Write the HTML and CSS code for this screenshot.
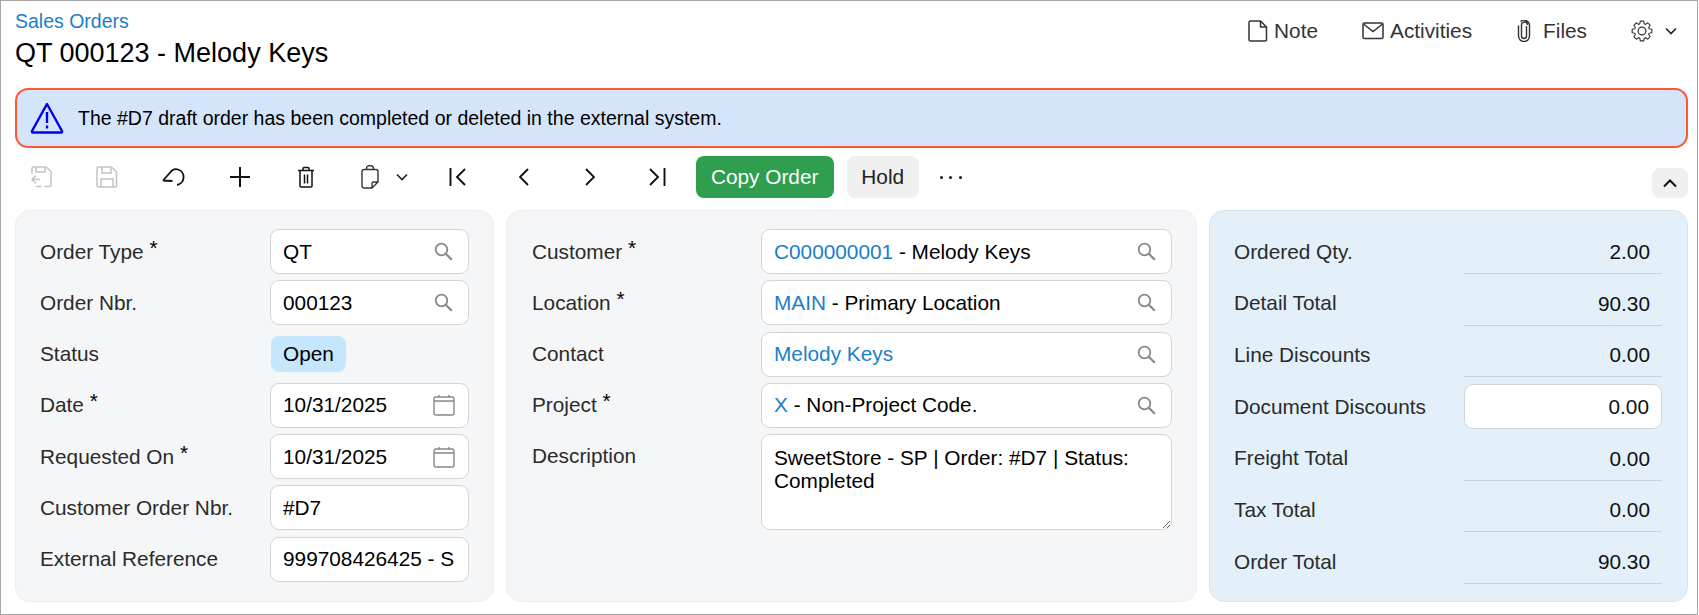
FILE: index.html

```html
<!DOCTYPE html>
<html>
	<head>
		<title>QT 000123 - Melody Keys</title>
		<meta charset="utf-8">
		<link rel="stylesheet" href="styles.css">
	</head>

	<body>
		<div class="page">

			<div class="header">
				<div>
					<a class="breadcrumb">Sales Orders</a>
					<h1 class="title">QT 000123 - Melody Keys</h1>
				</div>
				<div class="actions">
					<span class="action note">
						<svg width="20" height="22" viewBox="0 0 20 22"><path d="M2.5 1h10l6 6v12.500a1.500 1.500 0 0 1-1.500 1.500h-14.500a1.500 1.500 0 0 1-1.500-1.500v-17a1.500 1.500 0 0 1 1.500-1.500zM12.500 1v6h6" fill="none" stroke="#333" stroke-width="1.500"/></svg>
						Note
					</span>
					<span class="action activities">
						<svg width="22" height="18" viewBox="0 0 22 18"><rect x="1" y="1" width="20" height="15.500" rx="1.500" fill="none" stroke="#333" stroke-width="1.500"/><path d="M1.500 2l9.500 7.500 9.500-7.500" fill="none" stroke="#333" stroke-width="1.500"/></svg>
						Activities
					</span>
					<span class="action files">
						<svg width="14" height="22" viewBox="0 0 14 22"><path d="M9.500 6v10a2.500 2.500 0 0 1-5 0v-11a3 3 0 0 1 6 0v0M1.500 5.500v10.500a5.500 5.500 0 0 0 11 0v-11a5.500 5.500 0 0 0-9-3.500" fill="none" stroke="#333" stroke-width="1.400"/></svg>
						Files
					</span>
					<span class="action gear">
						<svg width="22" height="22" viewBox="-11 -11 22 22"><circle r="3.900" fill="none" stroke="#333" stroke-width="1.200"/><polygon points="-2.19,-7.17 -1.74,-9.85 1.74,-9.85 2.19,-7.17 3.52,-6.62 5.73,-8.19 8.19,-5.73 6.62,-3.52 7.17,-2.19 9.85,-1.74 9.85,1.74 7.17,2.19 6.62,3.52 8.19,5.73 5.73,8.19 3.52,6.62 2.19,7.17 1.74,9.85 -1.74,9.85 -2.19,7.17 -3.52,6.62 -5.73,8.19 -8.19,5.73 -6.62,3.52 -7.17,2.19 -9.85,1.74 -9.85,-1.74 -7.17,-2.19 -6.62,-3.52 -8.19,-5.73 -5.73,-8.19 -3.52,-6.62" fill="none" stroke="#333" stroke-width="1.100" stroke-linejoin="round"/></svg>
						<svg width="12" height="8" viewBox="0 0 12 8"><path d="M1 1.500l5 5 5-5" fill="none" stroke="#222" stroke-width="1.600"/></svg>
					</span>
				</div>
			</div>

			<div class="alert">
				<svg width="34" height="32" viewBox="0 0 34 32"><path d="M17 2l15 27a1 1 0 0 1-1 1.500h-28a1 1 0 0 1-1-1.500z" fill="none" stroke="#0000f0" stroke-width="2.400" stroke-linejoin="round"/><rect x="15.800" y="10" width="2.400" height="11" fill="#0000f0"/><rect x="15.800" y="23.500" width="2.400" height="3" fill="#0000f0"/></svg>
				<span>The #D7 draft order has been completed or deleted in the external system.</span>
			</div>

			<div class="toolbar">
				<span class="tool">
					<svg width="22" height="22" viewBox="0 0 22 22"><path d="M2 8v-5.500a1.500 1.500 0 0 1 1.500-1.500h12.500l5 4.500v13.500a1.500 1.500 0 0 1-1.500 1.500h-5M6 1v5h9v-5M10 13.500h-8M6 9.500l-4 4 4 4M6.500 20.500h5" fill="none" stroke="#c4c4c4" stroke-width="1.500"/></svg>
				</span>
				<span class="tool">
					<svg width="22" height="22" viewBox="0 0 22 22"><path d="M2.500 1h13l5 5v13.500a1.500 1.500 0 0 1-1.500 1.500h-16.500a1.500 1.500 0 0 1-1.500-1.500v-17a1.500 1.500 0 0 1 1.500-1.500zM6 1v6h9v-6M5 21v-8h12v8" fill="none" stroke="#c4c4c4" stroke-width="1.500"/></svg>
				</span>
				<span class="tool">
					<svg width="24" height="20" viewBox="0 0 24 20"><path d="M2 13.500l9-10q3-2 6-1a8 8 0 0 1-1 15.500M2 13.500l9.500.5" fill="none" stroke="#111" stroke-width="1.800"/></svg>
				</span>
				<span class="tool">
					<svg width="22" height="22" viewBox="0 0 22 22"><path d="M11 1v20M1 11h20" fill="none" stroke="#111" stroke-width="2"/></svg>
				</span>
				<span class="tool">
					<svg width="18" height="22" viewBox="0 0 18 22"><path d="M1 4.500h16M3 4.500v15.500a1 1 0 0 0 1 1h10a1 1 0 0 0 1-1v-15.500M6 4.500v-2a1 1 0 0 1 1-1h4a1 1 0 0 1 1 1v2M7.500 8.500v9M10.500 8.500v9" fill="none" stroke="#111" stroke-width="1.500"/></svg>
				</span>
				<span class="tool tool-wide">
					<svg width="18" height="24" viewBox="0 0 18 24"><path d="M3 4.500h12a2 2 0 0 1 2 2v10.500l-6 6h-8a2 2 0 0 1-2-2v-14.500a2 2 0 0 1 2-2zM5.500 4.500v-1a3.500 3 0 0 1 7 0v1M17 17h-4.500a1.500 1.500 0 0 0-1.500 1.500v4.500" fill="none" stroke="#333" stroke-width="1.400"/></svg>
					<svg width="12" height="8" viewBox="0 0 12 8"><path d="M1 1.500l5 5 5-5" fill="none" stroke="#222" stroke-width="1.600"/></svg>
				</span>
				<span class="tool">
					<svg width="18" height="18" viewBox="0 0 18 18"><path d="M1.500 0v18M16 1l-8 8 8 8" fill="none" stroke="#111" stroke-width="1.900"/></svg>
				</span>
				<span class="tool">
					<svg width="10" height="18" viewBox="0 0 10 18"><path d="M9 1l-8 8 8 8" fill="none" stroke="#111" stroke-width="1.900"/></svg>
				</span>
				<span class="tool">
					<svg width="10" height="18" viewBox="0 0 10 18"><path d="M1 1l8 8-8 8" fill="none" stroke="#111" stroke-width="1.900"/></svg>
				</span>
				<span class="tool">
					<svg width="18" height="18" viewBox="0 0 18 18"><path d="M16.500 0v18M2 1l8 8-8 8" fill="none" stroke="#111" stroke-width="1.900"/></svg>
				</span>
				<button class="btn btn-green">Copy Order</button>
				<button class="btn btn-grey">Hold</button>
				<span class="dots"><i></i><i></i><i></i></span>
				<span class="collapse">
					<svg width="14" height="9" viewBox="0 0 14 9"><path d="M1 7.500l6-6 6 6" fill="none" stroke="#111" stroke-width="2"/></svg>
				</span>
			</div>

			<div class="panels">

				<div class="panel form form-left">
					<label>Order Type <b>*</b></label>
					<div class="field"><span>QT</span><svg class="search" width="19" height="19" viewBox="0 0 19 19"><use href="#search"/></svg></div>
					<label>Order Nbr.</label>
					<div class="field"><span>000123</span><svg class="search" width="19" height="19" viewBox="0 0 19 19"><use href="#search"/></svg></div>
					<label>Status</label>
					<div class="status"><span class="pill">Open</span></div>
					<label>Date <b>*</b></label>
					<div class="field"><span>10/31/2025</span><svg width="22" height="22" viewBox="0 0 22 22"><use href="#calendar"/></svg></div>
					<label>Requested On <b>*</b></label>
					<div class="field"><span>10/31/2025</span><svg width="22" height="22" viewBox="0 0 22 22"><use href="#calendar"/></svg></div>
					<label>Customer Order Nbr.</label>
					<div class="field"><span>#D7</span></div>
					<label>External Reference</label>
					<div class="field"><span>999708426425 - S</span></div>
				</div>

				<div class="panel form form-mid">
					<label>Customer <b>*</b></label>
					<div class="field"><span><a>C000000001</a> - Melody Keys</span><svg class="search" width="19" height="19" viewBox="0 0 19 19"><use href="#search"/></svg></div>
					<label>Location <b>*</b></label>
					<div class="field"><span><a>MAIN</a> - Primary Location</span><svg class="search" width="19" height="19" viewBox="0 0 19 19"><use href="#search"/></svg></div>
					<label>Contact</label>
					<div class="field"><span><a>Melody Keys</a></span><svg class="search" width="19" height="19" viewBox="0 0 19 19"><use href="#search"/></svg></div>
					<label>Project <b>*</b></label>
					<div class="field"><span><a>X</a> - Non-Project Code.</span><svg class="search" width="19" height="19" viewBox="0 0 19 19"><use href="#search"/></svg></div>
					<label class="top">Description</label>
					<textarea class="desc" readonly>SweetStore - SP | Order: #D7 | Status: Completed</textarea>
				</div>

				<div class="panel totals">
					<label>Ordered Qty.</label><div class="amount">2.00</div>
					<label>Detail Total</label><div class="amount">90.30</div>
					<label>Line Discounts</label><div class="amount">0.00</div>
					<label>Document Discounts</label><div class="amount amount-input">0.00</div>
					<label>Freight Total</label><div class="amount">0.00</div>
					<label>Tax Total</label><div class="amount">0.00</div>
					<label>Order Total</label><div class="amount">90.30</div>
				</div>

			</div>
		</div>

		<svg class="defs" width="0" height="0">
			<symbol id="search" viewBox="0 0 19 19"><circle cx="7.500" cy="7.500" r="5.800" fill="none" stroke="#888" stroke-width="1.800"/><path d="M11.800 11.800l6 6" stroke="#888" stroke-width="2.200"/></symbol>
			<symbol id="calendar" viewBox="0 0 22 22"><path d="M3 3h16a2 2 0 0 1 2 2v14a2 2 0 0 1-2 2h-16a2 2 0 0 1-2-2v-14a2 2 0 0 1 2-2zM1 7h20M6 1v2M16 1v2" fill="none" stroke="#888" stroke-width="1.400"/></symbol>
		</svg>
	</body>
</html>
```

FILE: styles.css

```css
html, body {
	margin: 0;
	background-color: #fff;
}

body {
	font-family: "Liberation Sans", Arial, sans-serif;
	font-size: 20.8px;
	color: #111;
}

.defs {
	position: absolute;
}

.page {
	box-sizing: border-box;
	height: 615px;
	margin-right: 1px;
	border: 1px solid #a6a6a6;
	padding: 0 9px 0 14px;
	overflow: hidden;
}

/* header */
.header {
	display: flex;
	justify-content: space-between;
	height: 87px;
}

.breadcrumb {
	display: block;
	margin-top: 10px;
	font-size: 19.5px;
	line-height: 21px;
	color: #1a7fc9;
}

.title {
	margin: 6px 0 0;
	font-size: 27px;
	font-weight: normal;
	line-height: 31px;
	color: #000;
}

.actions {
	display: flex;
	align-items: center;
	height: 60px;
	color: #333;
}

.action {
	display: flex;
	align-items: center;
}

.note {
	gap: 6px;
	margin-right: 44px;
}

.activities {
	gap: 6px;
	margin-right: 45px;
}

.files {
	gap: 12px;
	margin-right: 44px;
}

.gear {
	gap: 12px;
	margin-right: 11px;
}

/* alert */
.alert {
	box-sizing: border-box;
	display: flex;
	align-items: center;
	gap: 14px;
	height: 60px;
	padding-left: 13px;
	border: 2px solid #ff5533;
	border-radius: 13px;
	background-color: #d4e4fb;
	font-size: 19.5px;
	color: #000;
}

/* toolbar */
.toolbar {
	display: flex;
	align-items: center;
	height: 42px;
	margin: 8px 0 0 -7px;
}

.tool {
	display: flex;
	align-items: center;
	justify-content: center;
	width: 66.2px;
	height: 42px;
}

.tool-wide {
	gap: 17px;
	width: 86px;
	padding-left: 6px;
	box-sizing: border-box;
}

.btn {
	height: 42px;
	border: 0;
	border-radius: 8px;
	font-family: inherit;
	font-size: 20.8px;
}

.btn-green {
	width: 138px;
	margin-left: 6px;
	background-color: #2f9e4f;
	color: #fff;
}

.btn-grey {
	width: 72px;
	margin-left: 13px;
	background-color: #f0f0f0;
	color: #222;
}

.dots {
	display: flex;
	gap: 6.5px;
	margin-left: 21px;
}

.dots i {
	width: 3px;
	height: 3px;
	border-radius: 50%;
	background-color: #111;
}

.collapse {
	display: flex;
	align-items: center;
	justify-content: center;
	align-self: flex-end;
	width: 36px;
	height: 30px;
	margin-left: auto;
	border-radius: 8px;
	background-color: #f0f0f0;
}

/* panels */
.panels {
	display: grid;
	grid-template-columns: 479px 691px 479px;
	gap: 12px;
	height: 392px;
	margin: 12px 0 0 0;
}

.panel {
	box-sizing: border-box;
	display: grid;
	grid-auto-rows: 45px;
	align-content: start;
	align-items: center;
	padding: 18px 24px 0 24px;
	border: 1px solid #eceef1;
	border-radius: 15px;
	background-color: #f5f6f8;
}

.form {
	row-gap: 6.3px;
}

.form-left {
	grid-template-columns: 1fr 199px;
}

.form-mid {
	grid-template-columns: 1fr 411px;
	padding-left: 25px;
}

label {
	color: #2b2b2b;
}

label.top {
	align-self: start;
	padding-top: 10px;
}

label b {
	font-weight: normal;
	color: #000;
	position: relative;
	top: -4px;
}

.field {
	box-sizing: border-box;
	display: flex;
	align-items: center;
	justify-content: space-between;
	height: 45px;
	padding: 0 13px 0 12px;
	border: 1px solid #d2d4d8;
	border-radius: 9px;
	background-color: #fff;
	color: #000;
}

.field span {
	overflow: hidden;
	white-space: nowrap;
}

.field a {
	color: #1a7fc9;
}

.search {
	margin-right: 2px;
}

.status {
	padding-left: 1px;
}

.pill {
	display: inline-block;
	padding: 0 12px;
	height: 36px;
	line-height: 36px;
	border-radius: 8px;
	background-color: #c5e6fd;
	color: #000;
}

.desc {
	box-sizing: border-box;
	display: block;
	width: 411px;
	height: 96px;
	margin: 0;
	padding: 11px 12px;
	border: 1px solid #d2d4d8;
	border-radius: 9px;
	background-color: #fff;
	font-family: inherit;
	font-size: 20.8px;
	line-height: 23px;
	color: #000;
	outline: none;
	align-self: start;
}

.totals {
	grid-template-columns: 1fr 198px;
	row-gap: 6.7px;
	padding-left: 24px;
	padding-right: 25px;
	border-color: #d5e6f3;
	background-color: #e3f0f9;
}

.amount {
	box-sizing: border-box;
	height: 45px;
	line-height: 45px;
	padding-right: 12px;
	border-bottom: 1px solid #c5d2dc;
	text-align: right;
	color: #111;
}

.amount-input {
	border: 1px solid #d2d4d8;
	border-radius: 9px;
	background-color: #fff;
	line-height: 43px;
}
```
